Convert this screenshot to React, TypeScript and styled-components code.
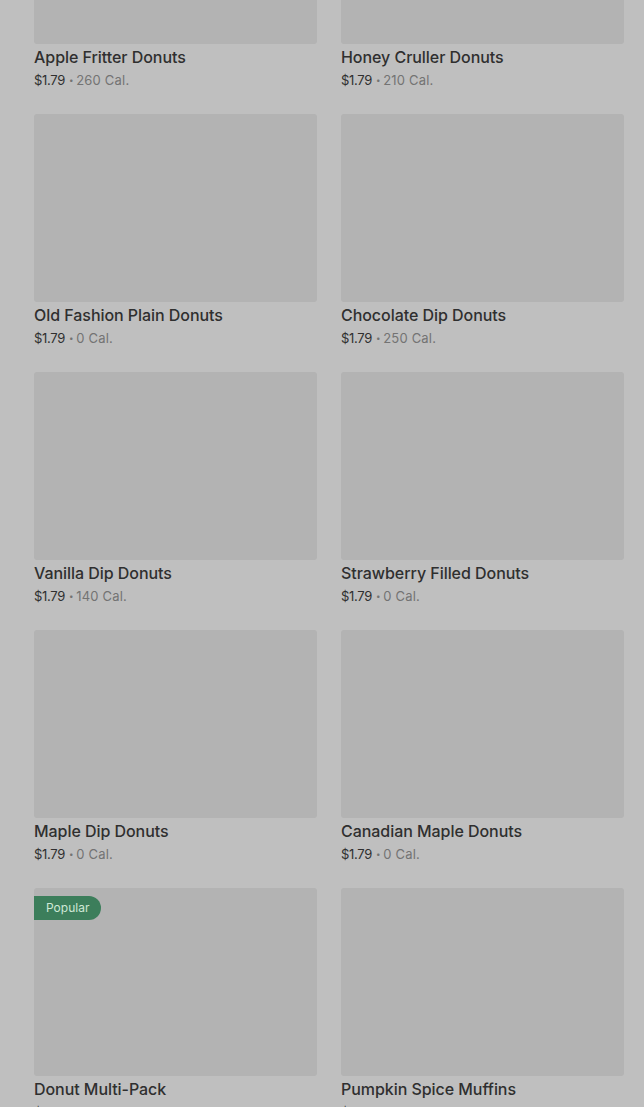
import styled, { createGlobalStyle } from "styled-components";

const GlobalStyle = createGlobalStyle`
  html, body {
    margin: 0;
    padding: 0;
    background: #bfbfbf;
    overflow: hidden;
  }
  body {
    font-family: Inter, "Noto Sans", sans-serif;
  }
`;

const Page = styled.div`
  height: 1107px;
  overflow: hidden;
  background: #bfbfbf;
  padding: 0 20px 0 34px;
`;

const Grid = styled.div`
  display: grid;
  grid-template-columns: 283px 283px;
  column-gap: 24px;
  row-gap: 25px;
  margin-top: -144px;
`;

const Card = styled.div`
  display: flex;
  flex-direction: column;
`;

const Thumb = styled.div`
  position: relative;
  height: 188px;
  background: #b3b3b3;
  border-radius: 3px;
  margin-bottom: 3px;
`;

const Badge = styled.span`
  position: absolute;
  top: 8px;
  left: 0;
  height: 24px;
  line-height: 24px;
  padding: 0 12px;
  background: #3c7e5b;
  color: #cfe8d6;
  font-size: 12px;
  border-radius: 0 12px 12px 0;
`;

const Title = styled.div`
  font-size: 16px;
  font-weight: 500;
  line-height: 20px;
  color: #2f2f2f;
  letter-spacing: -0.05px;
`;

const Meta = styled.div`
  margin-top: 4px;
  font-size: 13px;
  line-height: 18px;
  color: #2f2f2f;
  letter-spacing: -0.3px;
  display: flex;
  align-items: center;
`;

const Dot = styled.span`
  font-size: 8px;
  color: #737373;
  margin: 0 3px 0 4px;
`;

const Cal = styled.span`
  color: #737373;
  letter-spacing: 0.2px;
`;

type Item = { name: string; cal: string; badge?: string };

const items: Item[] = [
  { name: "Apple Fritter Donuts", cal: "260 Cal." },
  { name: "Honey Cruller Donuts", cal: "210 Cal." },
  { name: "Old Fashion Plain Donuts", cal: "0 Cal." },
  { name: "Chocolate Dip Donuts", cal: "250 Cal." },
  { name: "Vanilla Dip Donuts", cal: "140 Cal." },
  { name: "Strawberry Filled Donuts", cal: "0 Cal." },
  { name: "Maple Dip Donuts", cal: "0 Cal." },
  { name: "Canadian Maple Donuts", cal: "0 Cal." },
  { name: "Donut Multi-Pack", cal: "0 Cal.", badge: "Popular" },
  { name: "Pumpkin Spice Muffins", cal: "0 Cal." },
];

export default function App() {
  return (
    <>
      <GlobalStyle />
      <Page>
        <Grid>
          {items.map((it) => (
            <Card key={it.name}>
              <Thumb>{it.badge && <Badge>{it.badge}</Badge>}</Thumb>
              <Title>{it.name}</Title>
              <Meta>
                $1.79
                <Dot>•</Dot>
                <Cal>{it.cal}</Cal>
              </Meta>
            </Card>
          ))}
        </Grid>
      </Page>
    </>
  );
}
